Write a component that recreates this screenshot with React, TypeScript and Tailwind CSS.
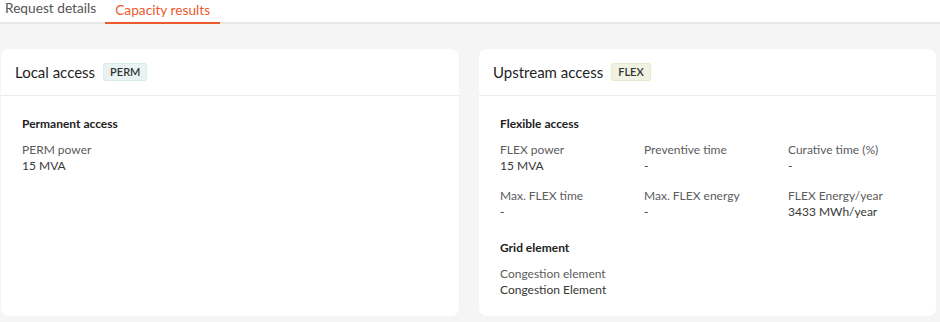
import React from 'react';

interface Field {
  label: string;
  value: string;
}

const font = { fontFamily: 'Lato, "Noto Sans", sans-serif' };

function FieldGrid({ fields, cols }: { fields: Field[]; cols: 1 | 3 }) {
  return (
    <div className={cols === 3 ? 'grid grid-cols-[144px_144px_1fr] gap-y-[14px]' : 'grid grid-cols-1 gap-y-[14px]'}>
      {fields.map(f => (
        <div key={f.label} className="text-[12px] leading-[16px]">
          <div className="text-[#5c5c5c]">{f.label}</div>
          <div className="text-[#383838]">{f.value}</div>
        </div>
      ))}
    </div>
  );
}

function Section({ title, children }: { title: string; children: React.ReactNode }) {
  return (
    <div className="flex flex-col gap-[10px]">
      <h3 className="text-[12px] leading-[16px] font-bold text-[#222]">{title}</h3>
      {children}
    </div>
  );
}

function Card({ title, badge, badgeClass, children }: {
  title: string; badge: string; badgeClass: string; children: React.ReactNode;
}) {
  return (
    <div className="flex-1 bg-white rounded-[8px] flex flex-col">
      <div className="h-[47px] shrink-0 flex items-center gap-[8px] border-b border-[#ebebeb] px-[14px]">
        <h2 className="text-[15px] text-[#1f1f1f]">{title}</h2>
        <span className={`h-[18px] px-[6px] flex items-center rounded-[3px] border text-[11px] font-semibold text-[#333] ${badgeClass}`}>
          {badge}
        </span>
      </div>
      <div className="px-[21px] pt-[20px] flex flex-col gap-[20px]">{children}</div>
    </div>
  );
}

export default function App() {
  return (
    <div className="w-[940px] h-[322px] bg-[#f5f5f5] overflow-hidden" style={font}>
      <nav className="h-[24px] bg-white border-b-[2px] border-[#e8e8e8] flex items-end">
        <button className="pl-[5px] pr-[9px] h-[22px] text-[13.7px] leading-[16px] text-[#555] pb-[7px]">Request details</button>
        <button className="px-[10px] h-[22px] text-[13.7px] leading-[16px] text-[#ea5a2b] border-b-[2px] border-[#ea5a2b] pb-[5px] -mb-[2px]">
          Capacity results
        </button>
      </nav>

      <main className="flex gap-[20px] pl-[1px] pr-[4px] pt-[25px]">
        <div className="w-[458px] h-[267px] flex">
          <Card title="Local access" badge="PERM" badgeClass="bg-[#e9f3f2] border-[#dbe9e7]">
            <Section title="Permanent access">
              <FieldGrid cols={1} fields={[{ label: 'PERM power', value: '15 MVA' }]} />
            </Section>
          </Card>
        </div>
        <div className="w-[457px] h-[267px] flex">
          <Card title="Upstream access" badge="FLEX" badgeClass="bg-[#f1f3e2] border-[#e4e8cf]">
            <Section title="Flexible access">
              <FieldGrid cols={3} fields={[
                { label: 'FLEX power', value: '15 MVA' },
                { label: 'Preventive time', value: '-' },
                { label: 'Curative time (%)', value: '-' },
                { label: 'Max. FLEX time', value: '-' },
                { label: 'Max. FLEX energy', value: '-' },
                { label: 'FLEX Energy/year', value: '3433 MWh/year' },
              ]} />
            </Section>
            <Section title="Grid element">
              <FieldGrid cols={1} fields={[{ label: 'Congestion element', value: 'Congestion Element' }]} />
            </Section>
          </Card>
        </div>
      </main>
    </div>
  );
}
